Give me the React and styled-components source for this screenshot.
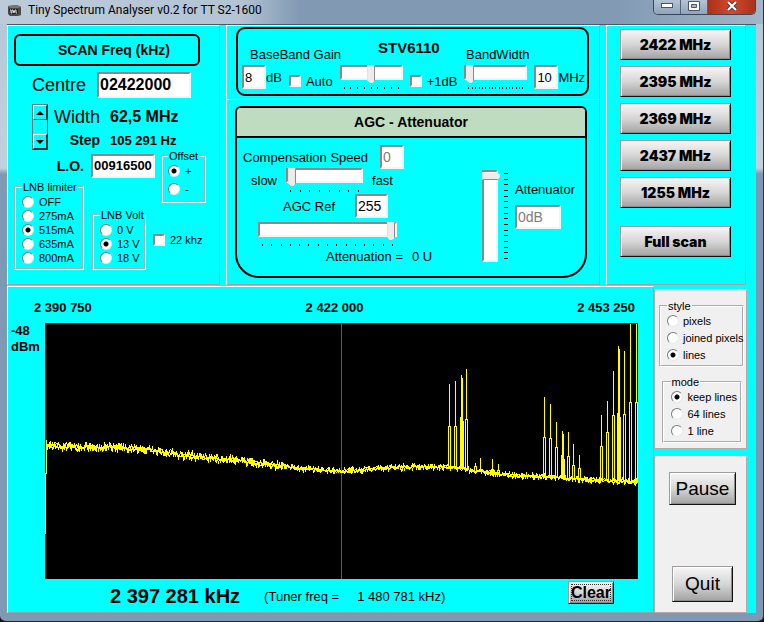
import React from 'react';
import styled, { createGlobalStyle, css } from 'styled-components';

const GlobalStyle = createGlobalStyle`
    * {
        box-sizing: border-box;
    }

    body {
        margin: 0;
        background: #111;
        color: #000;
        font-family: 'Liberation Sans', Arial, sans-serif;
        font-size: 13px;
    }

    button,
    input {
        font-family: inherit;
        margin: 0;
    }
`;

/* Window */

const Window = styled.div`
    display: flex;
    flex-direction: column;
    min-height: 100vh;
    padding: 0 7px 8px;
    border-bottom: 1px solid #1b2430;
    border-right: 1px solid #2a3542;
    border-radius: 0 0 6px 6px;
    background: linear-gradient(#b4c6d8 0, #c3d1de 168px, #7f98b3 174px, #7f98b3 100%);
`;

const TitleBar = styled.header`
    display: flex;
    align-items: flex-start;
    justify-content: space-between;
    height: 24px;
    margin: 0 -7px;
    padding: 0 7px;
    background: linear-gradient(90deg, #bccbda 0, #b3c4d5 240px, #8199b3 300px, #8199b3 80%, #a3b5c8 100%);
`;

const Title = styled.h1`
    display: flex;
    align-items: center;
    gap: 6px;
    margin: 0;
    height: 20px;
    font-family: Roboto, 'Open Sans', sans-serif;
    font-size: 12px;
    font-weight: 400;
    white-space: nowrap;
`;

const Caption = styled.div`
    display: flex;
    height: 15px;
    border: 1px solid #39475a;
    border-top: none;
    border-radius: 0 0 5px 5px;
    overflow: hidden;
`;

const CaptionButton = styled.button`
    display: flex;
    align-items: center;
    justify-content: center;
    width: ${({ $close }) => ($close ? 47 : 27)}px;
    padding: 0 0 3px;
    border: none;
    border-right: ${({ $close }) => ($close ? 'none' : '1px solid #52637a')};
    background: ${({ $close }) =>
        $close ? 'linear-gradient(90deg, #a8321c, #d4492b 50%, #a8321c)' : 'linear-gradient(#b5c4d4, #8fa4ba)'};
`;

const Client = styled.main`
    display: flex;
    flex: 1;
    flex-direction: column;
    gap: 1px;
    border-top: 1px solid #4a5a6c;
    background: #0ff;
`;

const TopRow = styled.div`
    display: grid;
    grid-template-columns: 213px minmax(0, 1fr) 140px;
    gap: 6px;
    padding-right: 10px;
`;

const Panel = styled.section`
    border: 1px solid;
    border-color: #fff #a0a0a0 #a0a0a0 #fff;
`;

/* Controls */

const bevelIn = css`
    border: 2px solid;
    border-color: #8a8a8a #f4f4f4 #f4f4f4 #8a8a8a;
    background: #fff;
`;

const TextBox = styled.input`
    ${bevelIn}
    width: ${({ $width }) => $width}px;
    height: ${({ $height }) => $height || 24}px;
    padding: 0 1px;
    color: #000;
    font-size: ${({ $size }) => $size || 14}px;
    font-weight: ${({ $bold }) => ($bold ? 700 : 400)};

    &:disabled {
        color: #7d7d7d;
    }
`;

const Tick = styled.input`
    ${bevelIn}
    appearance: none;
    flex: none;
    width: 12px;
    height: 12px;
`;

const Radio = styled.input`
    appearance: none;
    flex: none;
    width: 12px;
    height: 12px;
    border: 1px solid;
    border-color: #7c7c7c #e8e8e8 #e8e8e8 #7c7c7c;
    border-radius: 50%;
    background: #fff;

    &:checked {
        background: radial-gradient(circle, #000 0, #000 2px, #fff 3px);
    }
`;

const Choice = styled.label`
    display: flex;
    align-items: center;
    gap: ${({ $gap }) => $gap || 5}px;
    height: ${({ $pitch }) => $pitch || 14}px;
    white-space: nowrap;
`;

const Group = styled.fieldset`
    min-width: 0;
    width: ${({ $width }) => $width}px;
    margin: 0;
    padding: ${({ $pad }) => $pad || '2px 7px 3px'};
    border: 2px groove #fff;
    font-size: 11px;
`;

const Legend = styled.legend`
    padding: 0 1px;
    line-height: 12px;
    white-space: nowrap;
`;

const RadioGroup = ({ name, legend, options, value, pitch, gap, ...rest }) => (
    <Group {...rest}>
        <Legend>{legend}</Legend>
        {options.map(option => (
            <Choice key={option} $pitch={pitch} $gap={gap}>
                <Radio type="radio" name={name} defaultChecked={option === value} />
                {option}
            </Choice>
        ))}
    </Group>
);

const SliderBox = styled.div`
    display: flex;
    flex-direction: ${({ $vertical }) => ($vertical ? 'row' : 'column')};
    flex: none;
    gap: 3px;
    width: ${({ $vertical, $length }) => ($vertical ? 28 : $length)}px;
    height: ${({ $vertical, $length }) => ($vertical ? `${$length}px` : 'auto')};
`;

const Range = styled.input`
    appearance: none;
    display: block;
    width: ${({ $vertical }) => ($vertical ? '19px' : '100%')};
    height: ${({ $vertical }) => ($vertical ? '100%' : '19px')};
    background: transparent;
    writing-mode: ${({ $vertical }) => ($vertical ? 'vertical-lr' : 'horizontal-tb')};

    &::-webkit-slider-runnable-track {
        ${bevelIn}
        width: ${({ $vertical }) => ($vertical ? '16px' : '100%')};
        height: ${({ $vertical }) => ($vertical ? '100%' : '15px')};
        margin: ${({ $vertical }) => ($vertical ? '0 3px 0 0' : '0 0 4px')};
    }

    &::-webkit-slider-thumb {
        appearance: none;
        width: ${({ $vertical }) => ($vertical ? 19 : 8)}px;
        height: ${({ $vertical }) => ($vertical ? 8 : 19)}px;
        margin: ${({ $vertical }) => ($vertical ? '0 0 0 -2px' : '-2px 0 0')};
        border: 1px solid;
        border-color: #fff #8a8a8a #8a8a8a #e0e0e0;
        background: #ececec;
        clip-path: ${({ $vertical }) =>
            $vertical
                ? 'polygon(0 0, 80% 0, 100% 50%, 80% 100%, 0 100%)'
                : 'polygon(0 0, 100% 0, 100% 80%, 50% 100%, 0 80%)'};
    }
`;

const Ticks = styled.div`
    display: flex;
    flex-direction: ${({ $vertical }) => ($vertical ? 'column' : 'row')};
    justify-content: space-between;
    padding: ${({ $vertical }) => ($vertical ? '3px 0' : '0 4px')};

    span {
        width: ${({ $vertical }) => ($vertical ? 4 : 1)}px;
        height: ${({ $vertical }) => ($vertical ? 1 : 2)}px;
        background: #000;
    }
`;

const Slider = ({ label, length, ticks, value, vertical }) => (
    <SliderBox $length={length} $vertical={vertical}>
        <Range type="range" aria-label={label} min="0" max="100" defaultValue={value} $vertical={vertical} />
        <Ticks $vertical={vertical}>
            {Array.from({ length: ticks }, (_, i) => (
                <span key={i} />
            ))}
        </Ticks>
    </SliderBox>
);

const PushButton = styled.button`
    height: ${({ $height }) => $height || 31}px;
    padding: 0 ${({ $pad }) => $pad || 0}px;
    border: 1px solid;
    border-color: #a09c9c #111 #111 #a09c9c;
    box-shadow: inset 1px 1px #fff, inset -1px -1px #8a8a8a;
    background: linear-gradient(#f6f6f6, #d6d6d6 50%, #a2a2a2);
    color: #000;
    font-size: ${({ $size }) => $size || 19}px;
    font-weight: ${({ $bold }) => ($bold ? 700 : 400)};
`;

/* Scan panel */

const ScanPanel = styled(Panel)`
    padding: 8px 19px 0 6px;
    height: 260px;
`;

const ScanTitle = styled.h2`
    margin: 0 0 6px;
    padding-left: 14px;
    border: 2px solid #000;
    border-radius: 6px;
    font-size: 14px;
    line-height: 28px;
    text-align: center;
`;

const CentreRow = styled.label`
    display: flex;
    align-items: center;
    justify-content: space-between;
    padding: 0 9px 0 18px;
    font-size: 18px;
    line-height: 22px;
`;

const WidthRow = styled.div`
    display: grid;
    grid-template-columns: 16px 46px 1fr;
    grid-template-rows: 26px 20px;
    column-gap: 6px;
    align-items: center;
    padding-left: 18px;
    margin-top: 6px;
`;

const Spinner = styled.div`
    display: flex;
    flex-direction: column;
    justify-content: space-between;
    grid-row: span 2;
    align-self: stretch;
    border: 1px solid #333;
    border-color: #777 #333 #333 #777;
`;

const SpinButton = styled.button`
    display: flex;
    align-items: center;
    justify-content: center;
    height: 15px;
    padding: 0;
    border: 1px solid;
    border-color: #fff #333 #333 #fff;
    background: #0ff;
`;

const Label = styled.span`
    font-size: ${({ $size }) => $size || 13}px;
    font-weight: ${({ $bold }) => ($bold ? 700 : 400)};
    text-align: ${({ $align }) => $align || 'left'};
    white-space: nowrap;
`;

const Value = styled(Label).attrs({ as: 'output' })`
    padding-left: 4px;
`;

const LnbGrid = styled.div`
    display: grid;
    grid-template-columns: 70px 61px 1fr;
    grid-template-rows: 31px 28px auto;
    column-gap: 8px;
`;

const OscillatorRow = styled.label`
    display: flex;
    align-items: center;
    justify-content: flex-end;
    gap: 7px;
    grid-column: span 2;
    margin-right: -2px;
    font-size: 14px;
    font-weight: 700;
`;

const OffsetCell = styled.div`
    grid-row: span 2;
`;

const LimiterCell = styled.div`
    grid-column: 1;
    grid-row: 2 / 4;
`;

const VoltCell = styled.div`
    display: flex;
    align-items: center;
    gap: 7px;
    grid-column: 2 / 4;
    font-size: 11px;
`;

const Scan = () => (
    <ScanPanel>
        <ScanTitle>SCAN Freq (kHz)</ScanTitle>
        <CentreRow>
            Centre
            <TextBox $width={94} $height={26} $size={16} $bold defaultValue="02422000" />
        </CentreRow>
        <WidthRow>
            <Spinner>
                <SpinButton aria-label="Wider">
                    <svg width="8" height="4">
                        <path d="M0 4 4 0 8 4z" />
                    </svg>
                </SpinButton>
                <SpinButton aria-label="Narrower">
                    <svg width="8" height="4">
                        <path d="M0 0h8L4 4z" />
                    </svg>
                </SpinButton>
            </Spinner>
            <Label $size={18}>Width</Label>
            <Value $size={16} $bold>
                62,5 MHz
            </Value>
            <Label $size={14} $bold $align="right">
                Step
            </Label>
            <Value $bold>105 291 Hz</Value>
        </WidthRow>
        <LnbGrid>
            <OscillatorRow>
                L.O.
                <TextBox $width={64} $size={13} $bold defaultValue="00916500" />
            </OscillatorRow>
            <OffsetCell>
                <RadioGroup name="offset" legend="Offset" options={['+', '-']} value="+" pitch={18} $width={45} $pad="0 5px 3px" />
            </OffsetCell>
            <LimiterCell>
                <RadioGroup
                    name="limiter"
                    legend="LNB limiter"
                    options={['OFF', '275mA', '515mA', '635mA', '800mA']}
                    value="515mA"
                    $width={70}
                    $pad="2px 5px 3px 6px"
                />
            </LimiterCell>
            <VoltCell>
                <RadioGroup name="volt" legend="LNB Volt" options={['0 V', '13 V', '18 V']} value="13 V" $width={54} $pad="2px 4px 3px 6px" />
                <Choice>
                    <Tick type="checkbox" />
                    22 khz
                </Choice>
            </VoltCell>
        </LnbGrid>
    </ScanPanel>
);

/* Tuner panels */

const TunerColumn = styled.div`
    display: flex;
    flex-direction: column;
`;

const TunerPanel = styled(Panel)`
    height: 74px;
    padding: 1px 10px 0 9px;
    border-bottom: none;
`;

const TunerBox = styled.div`
    height: 69px;
    padding: 11px 4px 0;
    border: 2px solid #000;
    border-radius: 9px;
`;

const TunerHeadings = styled.div`
    display: grid;
    grid-template-columns: 128px 88px 1fr;
    padding-left: 8px;
    line-height: 16px;
    height: 25px;
`;

const TunerTitle = styled.h2`
    margin: 0;
    font-size: 15px;
    line-height: 16px;
`;

const Lowered = styled(Label)`
    padding-top: 7px;
`;

const TunerControls = styled.div`
    display: flex;
    align-items: flex-start;
    gap: 7px;
    font-size: 13px;
`;

const Field = styled.label`
    display: flex;
    align-items: center;
    gap: ${({ $gap }) => $gap || 0}px;
    white-space: nowrap;
`;

const CheckField = styled(Field)`
    gap: 5px;
    padding-top: 8px;
    height: 24px;
`;

const AgcPanel = styled(Panel)`
    flex: 1;
    padding: 6px 12px 0 8px;
`;

const AgcBox = styled.div`
    height: 172px;
    border: 2px solid #000;
    border-radius: 6px 6px 24px 24px;
    overflow: hidden;
`;

const AgcTitle = styled.h2`
    margin: 0;
    border-bottom: 2px solid #000;
    background: #c0dcc0;
    font-size: 14px;
    line-height: 28px;
    text-align: center;
`;

const AgcBody = styled.div`
    display: flex;
    gap: 15px;
    padding: 8px 6px 0;
`;

const AgcLeft = styled.div`
    display: flex;
    flex-direction: column;
    width: 224px;
`;

const AgcRow = styled.div`
    display: flex;
    align-items: ${({ $top }) => ($top ? 'flex-start' : 'center')};
    height: ${({ $height }) => $height}px;
    padding-left: ${({ $indent }) => $indent || 0}px;
    gap: ${({ $gap }) => $gap || 0}px;
`;

const AgcLevel = styled(AgcRow)`
    padding-top: 24px;
`;

const AttenuatorField = styled.label`
    display: flex;
    flex-direction: column;
    gap: 8px;
    padding-top: 12px;
`;

const Tuner = () => (
    <TunerColumn>
        <TunerPanel>
            <TunerBox>
                <TunerHeadings>
                    <Lowered>BaseBand Gain</Lowered>
                    <TunerTitle>STV6110</TunerTitle>
                    <Lowered>BandWidth</Lowered>
                </TunerHeadings>
                <TunerControls>
                    <Field>
                        <TextBox $width={24} $size={13} defaultValue="8" />
                        dB
                    </Field>
                    <CheckField>
                        <Tick type="checkbox" />
                        Auto
                    </CheckField>
                    <Slider label="BaseBand Gain" length={63} ticks={9} value={50} />
                    <CheckField>
                        <Tick type="checkbox" />
                        +1dB
                    </CheckField>
                    <Slider label="BandWidth" length={63} ticks={17} value={0} />
                    <Field>
                        <TextBox $width={24} $size={13} defaultValue="10" />
                        MHz
                    </Field>
                </TunerControls>
            </TunerBox>
        </TunerPanel>
        <AgcPanel>
            <AgcBox>
                <AgcTitle>AGC - Attenuator</AgcTitle>
                <AgcBody>
                    <AgcLeft>
                        <AgcRow $height={22}>
                            <Field $gap={12}>
                                Compensation Speed
                                <TextBox $width={24} defaultValue="0" disabled />
                            </Field>
                        </AgcRow>
                        <AgcRow $height={24} $indent={8} $gap={9}>
                            slow
                            <Slider label="Compensation Speed" length={77} ticks={8} value={0} />
                            fast
                        </AgcRow>
                        <AgcRow $height={28} $indent={40}>
                            <Field $gap={20}>
                                AGC Ref
                                <TextBox $width={33} defaultValue="255" />
                            </Field>
                        </AgcRow>
                        <AgcRow $height={28} $indent={15}>
                            <Slider label="AGC Ref" length={139} ticks={15} value={100} />
                        </AgcRow>
                        <AgcRow $height={16} $indent={83} $gap={9}>
                            <span>Attenuation =</span>
                            <output>0 U</output>
                        </AgcRow>
                    </AgcLeft>
                    <AgcLevel $top $gap={5}>
                        <Slider label="Attenuator" length={92} ticks={16} value={0} vertical />
                        <AttenuatorField>
                            Attenuator
                            <TextBox $width={46} defaultValue="0dB" disabled />
                        </AttenuatorField>
                    </AgcLevel>
                </AgcBody>
            </AgcBox>
        </AgcPanel>
    </TunerColumn>
);

/* Preset buttons */

const PresetPanel = styled(Panel)`
    display: flex;
    flex-direction: column;
    gap: 6px;
    padding: 3px 14px 0 13px;
`;

const PresetButton = styled(PushButton)`
    font-family: Inter, 'Liberation Sans', sans-serif;
    font-size: 14px;
    font-weight: 900;

    &:last-child {
        margin-top: 12px;
    }
`;

const PRESETS = ['2422 MHz', '2395 MHz', '2369 MHz', '2437 MHz', '1255 MHz', 'Full scan'];

/* Spectrum */

const BottomRow = styled.div`
    display: grid;
    grid-template-columns: minmax(0, 1fr) 93px;
    flex: 1;
    padding-right: 9px;
`;

const SpectrumPanel = styled(Panel)`
    padding: 13px 15px 0 3px;
`;

const FrequencyAxis = styled.div`
    display: flex;
    justify-content: space-between;
    padding: 0 3px 7px 23px;
    font-weight: 700;
    line-height: 16px;
`;

const ChartRow = styled.div`
    display: grid;
    grid-template-columns: 34px minmax(0, 1fr);
    font-weight: 700;
    line-height: 16px;

    svg {
        display: block;
        width: 100%;
        height: 256px;
        background: #000;
    }
`;

const Footer = styled.footer`
    display: flex;
    align-items: center;
    justify-content: space-between;
    height: 32px;
    padding: 2px 24px 0 99px;
`;

const Readout = styled.div`
    display: flex;
    align-items: center;
    gap: 24px;
`;

const TunerFreq = styled.span`
    display: flex;
    gap: 18px;
`;

const ClearButton = styled(PushButton)`
    align-self: flex-start;
    outline: 1px dotted #333;
    outline-offset: -4px;
`;

const CHART = { width: 593, height: 256 };

// noise floor: x, y
const FLOOR = [
    [0, 122],
    [40, 124],
    [75, 124],
    [100, 126],
    [125, 130],
    [155, 134],
    [185, 136],
    [215, 140],
    [255, 145],
    [296, 148],
    [335, 145],
    [375, 143],
    [405, 144],
    [435, 148],
    [465, 152],
    [495, 153],
    [525, 155],
    [555, 157],
    [593, 158]
];

// carriers: x, peak, shoulder, solid
const PEAKS = [
    [404, 60, 103],
    [410, 57, 103],
    [416, 51, 93, true],
    [421, 45, 96],
    [430, 139, 143],
    [435, 134, 146],
    [447, 135, 146],
    [453, 140, 147],
    [499, 73, 114],
    [505, 80, 115],
    [511, 98, 124],
    [517, 107, 131, true],
    [523, 108, 133],
    [528, 120, 142],
    [534, 131, 145],
    [556, 91, 123],
    [562, 77, 109],
    [568, 47, 92],
    [573, 22, 89, true],
    [579, 27, 91],
    [585, 0, 79],
    [591, 0, 79]
];

const floorAt = x => {
    const i = Math.max(1, FLOOR.findIndex(([px]) => px >= x));
    const [x0, y0] = FLOOR[i - 1];
    const [x1, y1] = FLOOR[i];
    return y0 + ((y1 - y0) * (x - x0)) / (x1 - x0);
};

const sweep = start => {
    let seed = start;
    const points = [];
    for (let x = 1; x < CHART.width; x++) {
        seed = (seed * 16807) % 2147483647;
        const noise = seed / 2147483647 + ((seed >> 8) % 100) / 100 - 1;
        points.push(`${x},${Math.round(floorAt(x) + noise * (x < 240 ? 5 : 3))}`);
    }
    return points.join(' ');
};

const peakPath = ([x, top, shoulder, solid]) => {
    const base = Math.round(floorAt(x));
    const stem = `M${x} ${top}V${shoulder}`;
    return solid
        ? `${stem}M${x + 1} ${top + 3}V${base}M${x} ${shoulder}V${base}M${x - 1} ${shoulder}V${base}M${x + 2} ${shoulder + 4}V${base}`
        : `${stem}M${x - 1} ${base}V${shoulder}H${x + 1}V${base}`;
};

const Spectrum = () => (
    <SpectrumPanel>
        <FrequencyAxis>
            <span>2 390 750</span>
            <span>2 422 000</span>
            <span>2 453 250</span>
        </FrequencyAxis>
        <ChartRow>
            <div>
                -48
                <br />
                dBm
            </div>
            <svg viewBox={`0 0 ${CHART.width} ${CHART.height}`} preserveAspectRatio="none" shapeRendering="crispEdges">
                <g fill="none" stroke="#ff0" transform="translate(0.5 0.5)">
                    <path d="M296 0V256" stroke="#2a802a" />
                    <path d="M0 210V150H1V122" />
                    <polyline points={sweep(7919)} />
                    <polyline points={sweep(104729)} />
                    <polyline points={sweep(611953)} />
                    <path d={PEAKS.map(peakPath).join('')} />
                </g>
            </svg>
        </ChartRow>
        <Footer>
            <Readout>
                <Label $size={20} $bold>
                    2 397 281 kHz
                </Label>
                <TunerFreq>
                    <span>(Tuner freq =</span>
                    <span>1 480 781 kHz)</span>
                </TunerFreq>
            </Readout>
            <ClearButton $height={23} $size={16} $pad={2} $bold>
                Clear
            </ClearButton>
        </Footer>
    </SpectrumPanel>
);

/* Side column */

const SideColumn = styled.aside`
    display: flex;
    flex-direction: column;
    gap: 7px;
    padding-top: 3px;
`;

const SidePanel = styled(Panel)`
    display: flex;
    flex-direction: column;
    align-items: center;
    gap: 9px;
    padding: 10px 2px 5px 4px;
    border-color: #fff #b8a8a8 #b8a8a8;
    background: #f0f0f0;
`;

const ActionPanel = styled(SidePanel)`
    flex: 1;
    justify-content: space-between;
    padding: 15px 0 10px 4px;
`;

const App = () => (
    <>
        <GlobalStyle />
        <Window>
            <TitleBar>
                <Title>
                    <svg width="15" height="15" viewBox="0 0 15 15">
                        <path d="M1 3l9-1 4 2v8l-3 1H3l-2-2z" fill="#4a4a4a" />
                        <path d="M1 3l9-1 4 2-3 1H3z" fill="#777" />
                        <path d="M2 6h9v5H3z" fill="#222" />
                        <path d="M3 7h1v3h1V7h1l1 3 1-3h1v3h1" fill="none" stroke="#ddd" />
                    </svg>
                    Tiny Spectrum Analyser v0.2 for TT S2-1600
                </Title>
                <Caption>
                    <CaptionButton aria-label="Minimize">
                        <svg width="12" height="5">
                            <rect x="0.5" y="0.5" width="11" height="4" fill="#fff" stroke="#4a5668" />
                        </svg>
                    </CaptionButton>
                    <CaptionButton aria-label="Maximize">
                        <svg width="12" height="10">
                            <path d="M.5.5h11v9H.5zM3.5 3.5v3h5v-3z" fill="#fff" fillRule="evenodd" stroke="#4a5668" />
                        </svg>
                    </CaptionButton>
                    <CaptionButton $close aria-label="Close">
                        <svg width="12" height="10" viewBox="0 0 12 10">
                            <path d="M2 1l8 8M10 1L2 9" stroke="#4a3a44" strokeWidth="4" />
                            <path d="M2 1l8 8M10 1L2 9" stroke="#fff" strokeWidth="2" />
                        </svg>
                    </CaptionButton>
                </Caption>
            </TitleBar>
            <Client>
                <TopRow>
                    <Scan />
                    <Tuner />
                    <PresetPanel>
                        {PRESETS.map(preset => (
                            <PresetButton key={preset}>{preset}</PresetButton>
                        ))}
                    </PresetPanel>
                </TopRow>
                <BottomRow>
                    <Spectrum />
                    <SideColumn>
                        <SidePanel>
                            <RadioGroup
                                name="style"
                                legend="style"
                                options={['pixels', 'joined pixels', 'lines']}
                                value="lines"
                                pitch={17}
                                gap={4}
                                $width={85}
                                $pad="0 0 2px 6px"
                            />
                            <RadioGroup
                                name="mode"
                                legend="mode"
                                options={['keep lines', '64 lines', '1 line']}
                                value="keep lines"
                                pitch={17}
                                $width={80}
                                $pad="0 0 2px 7px"
                            />
                        </SidePanel>
                        <ActionPanel>
                            <PushButton $height={33} $pad={6}>
                                Pause
                            </PushButton>
                            <PushButton $height={36} $pad={12}>
                                Quit
                            </PushButton>
                        </ActionPanel>
                    </SideColumn>
                </BottomRow>
            </Client>
        </Window>
    </>
);

export default App;
